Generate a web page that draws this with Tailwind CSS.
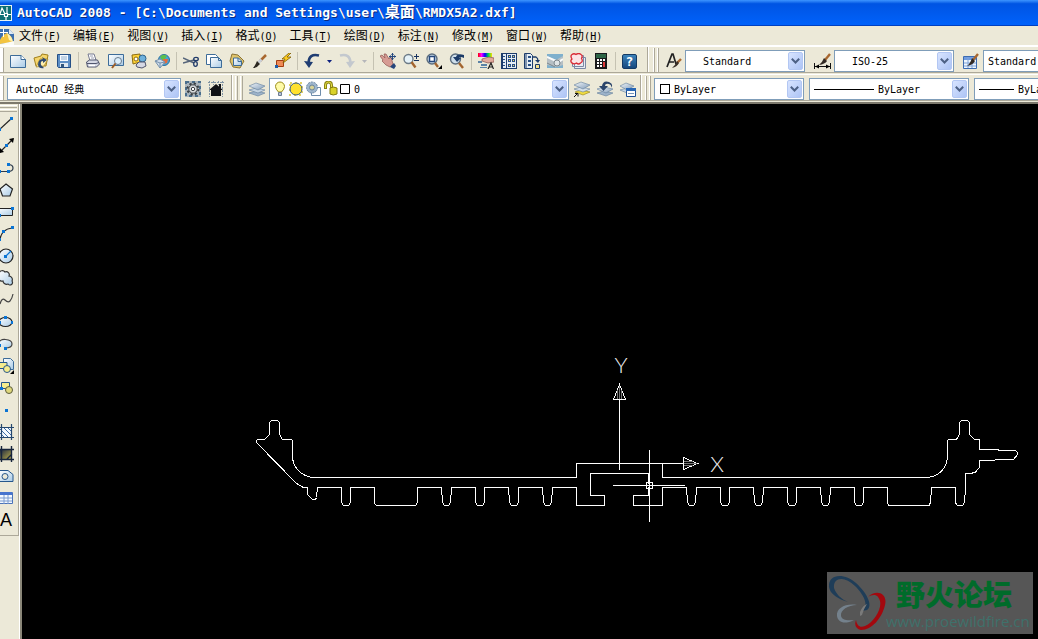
<!DOCTYPE html>
<html lang="zh-CN">
<head>
  <meta charset="UTF-8" />
  <meta name="viewport" content="width=device-width, initial-scale=1.0" />
  <title>AutoCAD 2008</title>
  <script src="https://cdn.jsdelivr.net/npm/@tailwindcss/browser@4"></script>
</head>
<body class="h-screen flex flex-col overflow-hidden bg-[#ece9d8] text-black font-['DejaVu_Sans_Mono','Noto_Sans_CJK_SC',monospace] text-[10px]">

  <!-- gradients shared by the icons -->
  <svg class="absolute w-0 h-0" aria-hidden="true">
    <defs>
      <linearGradient id="sheet" x1="0" y1="0" x2="1" y2="1"><stop offset="0" stop-color="#fff" /><stop offset="1" stop-color="#a9cbe6" /></linearGradient>
      <linearGradient id="steel" x1="0" y1="0" x2="1" y2="1"><stop offset="0" stop-color="#f4f8fb" /><stop offset="1" stop-color="#7f9ab8" /></linearGradient>
      <linearGradient id="rainbow"><stop offset="0" stop-color="#f00" /><stop offset=".25" stop-color="#f0f" /><stop offset=".5" stop-color="#00f" /><stop offset=".75" stop-color="#0d4" /><stop offset="1" stop-color="#fd0" /></linearGradient>
      <linearGradient id="dusk" x1="0" y1="0" x2="1" y2="1"><stop offset="0" stop-color="#16213f" /><stop offset="1" stop-color="#b5a94a" /></linearGradient>
    </defs>
  </svg>

  <header class="h-[26px] shrink-0 flex items-center gap-[5px] bg-linear-to-b from-[#3d95ff] via-[#0054e3] via-15% to-[#0062fb] border-b border-[#0040c0]">
    <svg class="w-3 h-4 shrink-0" viewBox="0 0 12 16"><path d="M0 0h12v16H0z" fill="#e9f3f3" /><path d="M0 1h11v14H0z" fill="#0c6f73" /><path d="M0 9l2-6 3 6M7 2v7M0 9.500h5M7 9.500h4M6 12v3M4.500 8.500h3v3h-3z" fill="none" stroke="#fff" stroke-width="1.200" /></svg>
    <h1 class="text-white font-bold text-[13px] leading-4 whitespace-pre [text-shadow:1px_1px_0_#0a2a80]">AutoCAD 2008 - [C:\Documents and Settings\user\<span class="text-[15px]">桌面</span>\RMDX5A2.dxf]</h1>
  </header>

  <nav class="h-[21px] shrink-0 flex items-center gap-3 pt-[2px] border-b-2 border-white whitespace-nowrap leading-4">
    <svg class="w-[14px] h-4 shrink-0 -mr-[7px]" viewBox="0 0 14 16"><path d="M0 0h9l5 5v11H0z" fill="#3d6fae" /><path d="M9 0v5h5z" fill="#dce8f4" /><path d="M0 11Q2 6 7 4q5 3 6 9l-6 1-7 1z" fill="#f3c440" /><path d="M7 4q5 3 6 9l-4-2z" fill="#fff1b0" /><path d="M3.500 0v8M0 3.500h8" stroke="#fff" /><path d="M0 15q6-1 14-3v4H0z" fill="#fbfbf4" /></svg>
    <button><span class="text-xs">文件</span>(<u>F</u>)</button>
    <button><span class="text-xs">编辑</span>(<u>E</u>)</button>
    <button><span class="text-xs">视图</span>(<u>V</u>)</button>
    <button><span class="text-xs">插入</span>(<u>I</u>)</button>
    <button><span class="text-xs">格式</span>(<u>O</u>)</button>
    <button><span class="text-xs">工具</span>(<u>T</u>)</button>
    <button><span class="text-xs">绘图</span>(<u>D</u>)</button>
    <button><span class="text-xs">标注</span>(<u>N</u>)</button>
    <button><span class="text-xs">修改</span>(<u>M</u>)</button>
    <button><span class="text-xs">窗口</span>(<u>W</u>)</button>
    <button><span class="text-xs">帮助</span>(<u>H</u>)</button>
  </nav>

  <!-- standard + styles toolbars -->
  <div class="h-[26px] shrink-0 flex border-b border-[#aca899]">
    <div class="flex items-end shrink-0 w-[648px] border-r border-[#aca899]">
      <span class="w-1 h-6 mr-[2px] border-r border-[#aca899] bg-white"></span>
      <button aria-label="New" class="w-[23px] h-[22px] grid place-items-center"><svg class="size-4" viewBox="0 0 16 16"><path d="M.5 2.500H11l4.500 4V14.500H.5z" fill="url(#sheet)" stroke="#3d6c99" /><path d="M11 2.500v4h4.500" fill="#fff" stroke="#3d6c99" /></svg></button>
      <button aria-label="Open" class="w-[23px] h-[22px] grid place-items-center"><svg class="size-4" viewBox="0 0 16 16"><path d="M1 5l7-2 1-2 6 1-2 11H3z" fill="#f5d56b" stroke="#a07f1c" /><path d="M3 14L7 6h8l-4 7z" fill="#fff0ae" stroke="#a07f1c" stroke-width=".7" /><path d="M5 12q0-6 5-6l-1-2 5 3-4 3V8q-3 0-2 4l3 3q-5 1-6-3z" fill="#304b70" /></svg></button>
      <button aria-label="Save" class="w-[23px] h-[22px] grid place-items-center"><svg class="size-4" viewBox="0 0 16 16"><path d="M1.500 1.500h13v13H2.500l-1-1z" fill="#5d8fc6" stroke="#244f86" /><path d="M4 2h8v6H4z" fill="#f7fbff" /><path d="M5 4h6M5 6h6" stroke="#8daccc" /><path d="M4 10h8v4H4z" fill="#dde8f2" /><path d="M5 11h3v3H5z" fill="#31577f" /></svg></button>
      <span class="w-px h-[18px] ml-[3px] mr-[2px] mb-[2px] bg-[#c5c2b2]"></span>
      <button aria-label="Plot" class="w-[23px] h-[22px] grid place-items-center"><svg class="size-4" viewBox="0 0 16 16"><path d="M3 1h6l2 6-6 1z" fill="#fff" stroke="#777b91" /><path d="M5 3h3M6 5h3" stroke="#9a9eb1" /><path d="M1.500 9l3-2 8 0 2 4-3 3-9 0z" fill="#d5d8e4" stroke="#51566e" /><path d="M2 10.500h9l3-1" stroke="#51566e" fill="none" /><path d="M4 12.500h6" stroke="#fff" stroke-width="1.500" /></svg></button>
      <button aria-label="Plot preview" class="w-[23px] h-[22px] grid place-items-center"><svg class="size-4" viewBox="0 0 16 16"><path d="M.5 1.500h15v11H.5z" fill="url(#sheet)" stroke="#3d6c99" /><circle cx="10" cy="8" r="3.500" fill="#dceffc" stroke="#697a8c" /><path d="M7.500 10.500L4 15" stroke="#9c5b25" stroke-width="2" /></svg></button>
      <button aria-label="Publish" class="w-[23px] h-[22px] grid place-items-center"><svg class="size-4" viewBox="0 0 16 16"><path d="M1 2l8-1v8l-7 2z" fill="#ffd337" stroke="#8b6b10" /><circle cx="5" cy="6" r="2" fill="#fff" stroke="#8b6b10" /><circle cx="11.500" cy="5.500" r="3.500" fill="#6eb1dc" stroke="#2c618c" /><path d="M5 12l3-3h6l1 4-4 2-5-1z" fill="#d5d8e4" stroke="#51566e" /></svg></button>
      <button aria-label="3DDWF" class="w-[23px] h-[22px] grid place-items-center"><svg class="size-4" viewBox="0 0 16 16"><circle cx="10" cy="7" r="5.500" fill="#4aa3d6" stroke="#2b719f" /><path d="M6 4q3-4 7-1l-2 3-3 1z" fill="#5fbf4c" /><path d="M9 6l5 0-1 4-4 1z" fill="#e56c3c" /><path d="M1 8l5-2 5 3-5 6z" fill="#cfdcea" stroke="#7692ad" /><path d="M1 8l5 2 5-1M6 10v5" fill="none" stroke="#7692ad" /></svg></button>
      <span class="w-px h-[18px] ml-[3px] mr-[2px] mb-[2px] bg-[#c5c2b2]"></span>
      <button aria-label="Cut" class="w-[23px] h-[22px] grid place-items-center"><svg class="size-4" viewBox="0 0 16 16"><path d="M0 5l11 5M0 10l11-3" stroke="#56657a" stroke-width="1.500" /><ellipse cx="13" cy="6" rx="2.300" ry="1.700" fill="none" stroke="#203a69" stroke-width="1.300" /><ellipse cx="12.500" cy="11" rx="1.800" ry="2.300" fill="none" stroke="#203a69" stroke-width="1.300" /></svg></button>
      <button aria-label="Copy" class="w-[23px] h-[22px] grid place-items-center"><svg class="size-4" viewBox="0 0 16 16"><path d="M.5 1.500h9l2 2v8H.5z" fill="#fff" stroke="#3d6c99" /><path d="M4.500 4.500h8l3 3v7h-11z" fill="url(#sheet)" stroke="#3d6c99" /><path d="M12.500 4.500v3h3" fill="none" stroke="#3d6c99" /></svg></button>
      <button aria-label="Paste" class="w-[23px] h-[22px] grid place-items-center"><svg class="size-4" viewBox="0 0 16 16"><path d="M3 1l6 1 6 6-4 7-7-1-3-6z" fill="#dfc36b" stroke="#8b7334" /><path d="M4.500 5h5l3 3v4.500h-8z" fill="url(#sheet)" stroke="#3d6c99" /><path d="M9 5v3.500h3" fill="none" stroke="#3d6c99" /></svg></button>
      <button aria-label="Match properties" class="w-[23px] h-[22px] grid place-items-center"><svg class="size-4" viewBox="0 0 16 16"><path d="M14 2L8 8" stroke="#a8672f" stroke-width="2.500" /><path d="M9.500 6.500l-3 3" stroke="#c9ced6" stroke-width="3" /><path d="M5 8l3 3q-3 4-7 4 2-2 4-7z" fill="#2c2822" /></svg></button>
      <button aria-label="Block editor" class="w-[23px] h-[22px] grid place-items-center"><svg class="size-4" viewBox="0 0 16 16"><path d="M1.500 7.500h7v6h-7z" fill="#ef8b56" stroke="#a33d12" /><path d="M0 12h3v3H0z" fill="#1d5ea8" /><path d="M14 0L7 6h3l-2 4 8-6h-4l4-4z" fill="#ffce1f" stroke="#7c5a00" stroke-width=".8" /></svg></button>
      <span class="w-px h-[18px] ml-[3px] mr-[2px] mb-[2px] bg-[#c5c2b2]"></span>
      <button aria-label="Undo" class="w-[23px] h-[22px] grid place-items-center"><svg class="size-4" viewBox="0 0 16 16"><path d="M15 2.500Q5 0 4.500 10" fill="none" stroke="#1f3d72" stroke-width="2.600" /><path d="M0 8l9 1-4 6z" fill="#1f3d72" /></svg></button>
      <button aria-label="Undo list" class="w-3 h-[22px] grid place-items-center"><svg class="w-[5px] h-[3px]" viewBox="0 0 5 3"><path d="M0 0h5L2.500 3z" fill="#0c2080" /></svg></button>
      <button aria-label="Redo" class="w-[23px] h-[22px] grid place-items-center"><svg class="size-4" viewBox="0 0 16 16"><path d="M1 2.500Q11 0 11.500 10" fill="none" stroke="#c3c8ce" stroke-width="2.600" /><path d="M16 8l-9 1 4 6z" fill="#c3c8ce" /></svg></button>
      <button aria-label="Redo list" class="w-3 h-[22px] grid place-items-center"><svg class="w-[5px] h-[3px]" viewBox="0 0 5 3"><path d="M0 0h5L2.500 3z" fill="#b5b6ba" /></svg></button>
      <span class="w-px h-[18px] ml-[3px] mr-[2px] mb-[2px] bg-[#c5c2b2]"></span>
      <button aria-label="Pan" class="w-[23px] h-[22px] grid place-items-center"><svg class="size-4" viewBox="0 0 16 16"><path d="M0 3l2-1 3 3-1-4h2l3 5 1-2h1L13 11l-3 3-4-2-4-4 1-1z" fill="#d69b93" stroke="#8e544f" stroke-width=".7" /><path d="M10 14l4-4 2 3-2 3z" fill="#26467c" /><path d="M12.500 0v7M9 3.500h7" stroke="#25497f" /><path d="M12.500 0l1.500 2h-3zM12.500 7l1.500-2h-3zM16 3.500L14 2v3zM9 3.500L11 2v3z" fill="#25497f" /></svg></button>
      <button aria-label="Zoom realtime" class="w-[23px] h-[22px] grid place-items-center"><svg class="size-4" viewBox="0 0 16 16"><circle cx="5.500" cy="6" r="4.500" fill="#e5f2f8" stroke="#6c7b87" stroke-width="1.400" /><path d="M8.500 9l4 5.500" stroke="#a3652f" stroke-width="2.400" /><path d="M13.500 1v5M11 3.500h5M11 7.500h5" stroke="#17325e" /></svg></button>
      <button aria-label="Zoom window" class="w-[23px] h-[22px] grid place-items-center"><svg class="size-4" viewBox="0 0 16 16"><circle cx="6" cy="6" r="5" fill="#cfdfeb" stroke="#5c6d7d" stroke-width="1.400" /><path d="M3.500 3.500h5v5h-5z" fill="#fff" stroke="#24477d" stroke-width="1.500" /><path d="M9 10l3 4" stroke="#a3652f" stroke-width="2.400" /><path d="M16 12v4h-4z" /></svg></button>
      <button aria-label="Zoom previous" class="w-[23px] h-[22px] grid place-items-center"><svg class="size-4" viewBox="0 0 16 16"><circle cx="6.500" cy="6" r="5" fill="#cfdfeb" stroke="#5c6d7d" stroke-width="1.400" /><path d="M15 2Q8 0 7 4H4l4 5 4-4h-2q1-2 5 0z" fill="#1c3b68" /><path d="M10 10l4 5" stroke="#a3652f" stroke-width="2.400" /></svg></button>
      <span class="w-px h-[18px] ml-[3px] mr-[2px] mb-[2px] bg-[#c5c2b2]"></span>
      <button aria-label="Properties" class="w-[23px] h-[22px] grid place-items-center"><svg class="size-4" viewBox="0 0 16 16"><path d="M0 0h14v4H0z" fill="url(#rainbow)" /><path d="M4 6l7-2 5 1v4l-6 1-6-2z" fill="#e2aa9d" stroke="#85504a" stroke-width=".7" /><path d="M0 8h4v2H0zM3 11h6v2H3zM2 14h7v1H2z" fill="#5c83a6" /><path d="M10 16l3-6 2.500 6M11 14h4" fill="none" stroke="#222" stroke-width="1.200" /></svg></button>
      <button aria-label="DesignCenter" class="w-[23px] h-[22px] grid place-items-center"><svg class="size-4" viewBox="0 0 16 16"><path d="M0 0h16v16H0z" fill="#1d3c6b" /><path d="M2 1h3v14H2zM6 1h9v14H6z" fill="#e5edf4" /><path d="M7 2h3v3H7zM11 2h3v3h-3zM7 6h3v3H7zM11 6h3v3h-3zM7 11h3v3H7zM11 11h3v3h-3z" fill="#284f84" /><path d="M8 3h1v1H8zM12 3h1v1h-1zM8 7h1v1H8zM12 7h1v1h-1zM8 12h1v1H8zM12 12h1v1h-1z" fill="#f6d15b" /><path d="M2 3.500h2M2 6.500h2M2 9.500h2M2 12.500h2" stroke="#284f84" /></svg></button>
      <button aria-label="Tool palettes" class="w-[23px] h-[22px] grid place-items-center"><svg class="size-4" viewBox="0 0 16 16"><path d="M.5.5h6l2 2v13h-8z" fill="#e5edf4" stroke="#1d3c6b" /><path d="M2 1v14" stroke="#1d3c6b" /><path d="M4 3h3v2H4zM4 7h3v2H4zM4 11h3v2H4z" fill="#284f84" /><path d="M8 4h4q2 1 2 4" fill="none" stroke="#1d3c6b" stroke-width="1.300" /><path d="M11 7h5l-2 3z" fill="#1d3c6b" /><path d="M11.500 11.500h4v4h-4z" fill="#f6e08a" stroke="#1d3c6b" /></svg></button>
      <button aria-label="Sheet set manager" class="w-[23px] h-[22px] grid place-items-center"><svg class="size-4" viewBox="0 0 16 16"><path d="M0 1h16v14H0z" fill="#7fb0cd" /><path d="M0 3l9 4 7-4v9l-6 2L0 12z" fill="#b6bfc4" /><path d="M0 4l9 4M10 10l6-4" fill="none" stroke="#f8fafb" stroke-width="2" /><circle cx="10" cy="10" r="3" fill="#dfe4e6" stroke="#7b868c" /><path d="M0 10l8 4" stroke="#7b868c" /></svg></button>
      <button aria-label="Markup set manager" class="w-[23px] h-[22px] grid place-items-center"><svg class="size-4" viewBox="0 0 16 16"><path d="M4.500 4.500h11v11h-11zM2.500 2.500h11v11h-11z" fill="#e9edf3" stroke="#7a88a3" /><path d="M2 1.500q2-1.500 4 0 3-2 5 0 2 1 .5 4 2 3-1 4.500-2 2-4 0-3 2-5-.5-1.500-2 .5-3.500Q0 3 2 1.500z" fill="#fbe5e5" stroke="#d92b35" stroke-width="1.300" /></svg></button>
      <button aria-label="QuickCalc" class="w-[23px] h-[22px] grid place-items-center"><svg class="size-4" viewBox="0 0 16 16"><path d="M2 0h12v16H2z" fill="#19191b" /><path d="M3 1h10v4H3z" fill="#2e6546" /><path d="M4 6h2v2H4zM7 6h2v2H7zM10 6h2v2h-2zM4 9h2v2H4zM7 9h2v2H7zM4 12h2v2H4zM7 12h2v2H7z" fill="#fff" /><path d="M10 9h2v5h-2z" fill="#e03a3a" /></svg></button>
      <span class="w-px h-[18px] ml-[3px] mr-[2px] mb-[2px] bg-[#c5c2b2]"></span>
      <button aria-label="Help" class="w-[23px] h-[22px] grid place-items-center"><span class="size-[15px] rounded-xs border border-[#143a64] bg-linear-to-b from-[#3c83bb] to-[#17497e] text-white font-bold text-[13px] leading-[13px]">?</span></button>
    </div>

    <div class="flex items-end flex-1 min-w-0 pl-1 gap-[2px] border-l border-white overflow-hidden">
      <span class="w-[3px] h-6 border-x border-l-white border-r-[#aca899]"></span>
      <span class="w-[3px] h-6 border-x border-l-white border-r-[#aca899]"></span>
      <span class="w-[18px] h-[22px] ml-1 grid place-items-center shrink-0"><svg class="size-4" viewBox="0 0 16 16"><path d="M1 14L6 1h1l3 10M3 9h5" fill="none" stroke="#222" stroke-width="1.700" /><path d="M15 6l-4 4" stroke="#a8672f" stroke-width="2.400" /><path d="M11 8l2 2q-2 4-7 5 3-2 5-7z" fill="#3a2f26" /></svg></span>
      <label class="relative w-[120px] h-[22px] shrink-0">
        <select aria-label="Text style" class="block appearance-none w-full h-full bg-white border border-[#7f9db9] pl-[17px] outline-none"><option>Standard</option></select>
        <span class="absolute right-[2px] top-[2px] w-[15px] h-[18px] rounded-xs border border-[#b3c7f3] bg-linear-to-br from-[#d8e4ff] to-[#adc4f5] grid place-items-center pointer-events-none"><svg class="w-[9px] h-[6px]" viewBox="0 0 9 6"><path d="M.8 .8l3.700 3.700L8.200 .8" fill="none" stroke="#4d6185" stroke-width="2" /></svg></span>
      </label>
      <span class="w-px h-[19px] ml-[2px] mr-px mb-[2px] bg-[#c5c2b2]"></span>
      <span class="w-[20px] h-[22px] grid place-items-center shrink-0"><svg class="w-[17px] h-4" viewBox="0 0 17 16"><path d="M16 1l-5 6" stroke="#a8672f" stroke-width="2.400" /><path d="M10 5l3 3q-2 3-8 4 3-2 5-7z" fill="#322a24" /><path d="M.5 10v6M16.500 10v6M1 13.500h15" stroke="#111" /><path d="M1 13.500l4-2v4zM16 13.500l-4-2v4z" /></svg></span>
      <label class="relative w-[120px] h-[22px] shrink-0">
        <select aria-label="Dimension style" class="block appearance-none w-full h-full bg-white border border-[#7f9db9] pl-[17px] outline-none"><option>ISO-25</option></select>
        <span class="absolute right-[2px] top-[2px] w-[15px] h-[18px] rounded-xs border border-[#b3c7f3] bg-linear-to-br from-[#d8e4ff] to-[#adc4f5] grid place-items-center pointer-events-none"><svg class="w-[9px] h-[6px]" viewBox="0 0 9 6"><path d="M.8 .8l3.700 3.700L8.200 .8" fill="none" stroke="#4d6185" stroke-width="2" /></svg></span>
      </label>
      <span class="w-px h-[19px] ml-[2px] mr-px mb-[2px] bg-[#c5c2b2]"></span>
      <span class="w-[20px] h-[22px] grid place-items-center shrink-0"><svg class="size-4" viewBox="0 0 16 16"><path d="M.5 3.500h13v12H.5z" fill="#eef5fd" stroke="#3d6cb0" /><path d="M1 4h12v3H1z" fill="#6f9be0" /><path d="M1 10h12M1 13h12M5 4v11M9 4v11" stroke="#7fa3d8" /><path d="M15 1l-5 6" stroke="#a8672f" stroke-width="2.400" /><path d="M9 5l3 3q-2 4-8 5 3-2 5-8z" fill="#322a24" /></svg></span>
      <label class="w-[120px] h-[22px] shrink-0">
        <select aria-label="Table style" class="block appearance-none w-full h-full bg-white border border-[#7f9db9] pl-1 outline-none"><option>Standard</option></select>
      </label>
    </div>
  </div>

  <!-- workspaces + layers + properties toolbars -->
  <div class="h-[27px] mt-px shrink-0 flex border-t border-t-white border-b border-b-[#aca899]">
    <div class="flex items-end shrink-0 w-[232px] border-r border-[#aca899]">
      <span class="w-1 h-6 mr-[3px] border-r border-[#aca899] bg-white"></span>
      <label class="relative w-[174px] h-[22px]">
        <select aria-label="Workspace" class="block appearance-none w-full h-full bg-white border border-[#7f9db9] pl-2 outline-none"><option>AutoCAD 经典</option></select>
        <span class="absolute right-[2px] top-[2px] w-[15px] h-[18px] rounded-xs border border-[#b3c7f3] bg-linear-to-br from-[#d8e4ff] to-[#adc4f5] grid place-items-center pointer-events-none"><svg class="w-[9px] h-[6px]" viewBox="0 0 9 6"><path d="M.8 .8l3.700 3.700L8.200 .8" fill="none" stroke="#4d6185" stroke-width="2" /></svg></span>
      </label>
      <button aria-label="Workspace settings" class="w-[23px] h-[22px] grid place-items-center"><svg class="size-4" viewBox="0 0 16 16"><path d="M0 0h16v16H0z" fill="#a9b4bc" /><path d="M1 1h14v14H1z" fill="none" stroke="#4a6e8c" stroke-width="2" stroke-dasharray="3 3" /><circle cx="8" cy="8" r="5.500" fill="none" stroke="#3a3f43" stroke-width="2" stroke-dasharray="2.200 2.120" /><circle cx="8" cy="8" r="4.200" fill="#d9dcde" stroke="#3a3f43" /><circle cx="8" cy="8" r="1.700" fill="#fff" stroke="#3a3f43" /></svg></button>
      <button aria-label="My workspace" class="w-[23px] h-[22px] grid place-items-center"><svg class="size-4" viewBox="0 0 16 16"><path d="M0 1.500h16M1.500 0v16M5.500 0v4M10.500 0v4M14.500 0v16" stroke="#8194a4" stroke-dasharray="2 1" /><path d="M1 9l7-6 7 6h-2v6H3V9z" fill="#101216" /><path d="M11 3h2v4h-2z" fill="#101216" /></svg></button>
    </div>

    <div class="flex items-end shrink-0 w-[409px] border-l border-white border-r border-r-[#aca899] pl-[2px] gap-[2px]">
      <span class="w-[3px] h-6 border-x border-l-white border-r-[#aca899]"></span>
      <span class="w-[3px] h-6 border-x border-l-white border-r-[#aca899]"></span>
      <button aria-label="Layer properties manager" class="w-[23px] h-[22px] grid place-items-center"><svg class="size-4" viewBox="0 0 16 16"><path d="M0 12l7-2 9 2-7 3z" fill="#9db3ca" stroke="#637f9c" stroke-width=".6" /><path d="M0 9l7-2 9 2-7 3z" fill="#c6d5e3" stroke="#637f9c" stroke-width=".6" /><path d="M0 5l7-3 9 3-7 4z" fill="url(#steel)" stroke="#637f9c" stroke-width=".6" /></svg></button>
      <label class="relative w-[300px] h-[22px] shrink-0 -ml-px">
        <select aria-label="Layer" class="block appearance-none w-full h-full bg-white border border-[#7f9db9] pl-[84px] outline-none"><option>0</option></select>
        <svg class="absolute left-1 top-[3px] w-[78px] h-4 pointer-events-none" viewBox="0 0 78 16">
          <path d="M5.500 11Q2.500 8 2.500 5.500a4.500 4.500 0 0 1 9 0Q11.500 8 8.500 11z" fill="#fffba8" stroke="#9b8c18" />
          <path d="M5.500 11.500h3v3h-3z" fill="#b9c5d6" stroke="#6c7c92" />
          <path d="M17 2h12v12H17z" fill="none" stroke="#e3d267" stroke-width="2" stroke-dasharray="2 3" />
          <circle cx="23" cy="8" r="6" fill="#ffe12d" stroke="#34597c" />
          <path d="M38.500 6.500h9v8h-9z" fill="#fff" stroke="#6f8dab" />
          <circle cx="39" cy="6.500" r="5.500" fill="#9fb6cc" stroke="#6985a1" stroke-dasharray="2 1" />
          <circle cx="39" cy="6.500" r="2.500" fill="#d9d396" stroke="#6985a1" />
          <path d="M52.500 8V4q0-3 3-3t3 3v3" fill="none" stroke="#8b8415" stroke-width="3" />
          <path d="M52.500 7V4q0-3 3-3t3 3v3" fill="none" stroke="#e4dd47" />
          <path d="M57 7q3-2 7 0v6q-4 2-7 0z" fill="#d9d229" stroke="#827b12" />
          <path d="M67.500 3.500h9v9h-9z" fill="#fff" stroke="#000" />
        </svg>
        <span class="absolute right-[2px] top-[2px] w-[15px] h-[18px] rounded-xs border border-[#b3c7f3] bg-linear-to-br from-[#d8e4ff] to-[#adc4f5] grid place-items-center pointer-events-none"><svg class="w-[9px] h-[6px]" viewBox="0 0 9 6"><path d="M.8 .8l3.700 3.700L8.200 .8" fill="none" stroke="#4d6185" stroke-width="2" /></svg></span>
      </label>
      <button aria-label="Make object's layer current" class="w-[21px] h-[22px] grid place-items-center"><svg class="size-4" viewBox="0 0 16 16"><path d="M1 11l6-2 9 2-7 3z" fill="#f1dc42" stroke="#8d7f19" stroke-width=".6" /><path d="M0 8l7-2 9 2-7 3z" fill="#d4dfe9" stroke="#637f9c" stroke-width=".6" /><path d="M0 4l7-3 9 3-7 4z" fill="url(#steel)" stroke="#637f9c" stroke-width=".6" /><path d="M0 16l3-3M1 12.500h3v3" fill="none" stroke="#111" /></svg></button>
      <button aria-label="Layer previous" class="w-[21px] h-[22px] grid place-items-center"><svg class="size-4" viewBox="0 0 16 16"><path d="M0 12l7-2 9 2-7 3z" fill="#9db3ca" stroke="#637f9c" stroke-width=".6" /><path d="M0 8l7-2 9 2-7 4z" fill="url(#steel)" stroke="#637f9c" stroke-width=".6" /><path d="M12 1Q6-1 5 5H2l4.500 5L11 5H8q0-3 4-2 3 1 2 4 3-4-2-6z" fill="#2b456b" /></svg></button>
      <button aria-label="Layer states manager" class="w-[21px] h-[22px] grid place-items-center"><svg class="size-4" viewBox="0 0 16 16"><path d="M0 9l7-2 7 2-7 3z" fill="#c6d5e3" stroke="#637f9c" stroke-width=".6" /><path d="M0 5l6-3 8 3-7 4z" fill="url(#steel)" stroke="#637f9c" stroke-width=".6" /><path d="M6.500 7.500h9v8h-9z" fill="#fff" stroke="#1e4f94" /><path d="M6 7h10v3H6z" fill="#2866b4" /><path d="M8 12.500h6" stroke="#7795bb" /></svg></button>
    </div>

    <div class="flex items-end flex-1 min-w-0 pl-[3px] gap-[2px] border-l border-white overflow-hidden">
      <span class="w-[3px] h-6 border-x border-l-white border-r-[#aca899]"></span>
      <span class="w-[3px] h-6 border-x border-l-white border-r-[#aca899]"></span>
      <label class="relative w-[150px] h-[22px] ml-px shrink-0">
        <select aria-label="Color" class="block appearance-none w-full h-full bg-white border border-[#7f9db9] pl-[19px] outline-none"><option>ByLayer</option></select>
        <span class="absolute left-[6px] top-[6px] size-[10px] border border-black pointer-events-none"></span>
        <span class="absolute right-[2px] top-[2px] w-[15px] h-[18px] rounded-xs border border-[#b3c7f3] bg-linear-to-br from-[#d8e4ff] to-[#adc4f5] grid place-items-center pointer-events-none"><svg class="w-[9px] h-[6px]" viewBox="0 0 9 6"><path d="M.8 .8l3.700 3.700L8.200 .8" fill="none" stroke="#4d6185" stroke-width="2" /></svg></span>
      </label>
      <span class="w-px h-[19px] mr-px mb-[2px] bg-[#c5c2b2]"></span>
      <label class="relative w-[160px] h-[22px] shrink-0">
        <select aria-label="Linetype" class="block appearance-none w-full h-full bg-white border border-[#7f9db9] pl-[68px] outline-none"><option>ByLayer</option></select>
        <span class="absolute left-[5px] top-[11px] w-[60px] h-px bg-black pointer-events-none"></span>
        <span class="absolute right-[2px] top-[2px] w-[15px] h-[18px] rounded-xs border border-[#b3c7f3] bg-linear-to-br from-[#d8e4ff] to-[#adc4f5] grid place-items-center pointer-events-none"><svg class="w-[9px] h-[6px]" viewBox="0 0 9 6"><path d="M.8 .8l3.700 3.700L8.200 .8" fill="none" stroke="#4d6185" stroke-width="2" /></svg></span>
      </label>
      <span class="w-px h-[19px] mr-px mb-[2px] bg-[#c5c2b2]"></span>
      <label class="relative w-[160px] h-[22px] shrink-0">
        <select aria-label="Lineweight" class="block appearance-none w-full h-full bg-white border border-[#7f9db9] pl-[43px] outline-none"><option>ByLayer</option></select>
        <span class="absolute left-[5px] top-[11px] w-[35px] h-px bg-black pointer-events-none"></span>
      </label>
    </div>
  </div>

  <main class="flex-1 min-h-0 flex mt-px border-t-2 border-[#7d796d]">
    <!-- draw toolbar, its left edge runs off the window -->
    <aside class="w-5 shrink-0 border-r border-white">
      <div class="w-[19px] border-r border-b border-[#aca899] pb-1 overflow-hidden">
        <div class="h-[9px] pt-px flex flex-col gap-px">
          <span class="w-[17px] h-[3px] border-y border-t-white border-b-[#aca899]"></span>
          <span class="w-[17px] h-[3px] border-y border-t-white border-b-[#aca899]"></span>
        </div>
        <button aria-label="Line" class="flex items-center h-[22px]"><svg class="w-[14px] h-4" viewBox="0 0 14 16"><path d="M0 13L12 2" stroke="#222" stroke-width="1.200" /><path d="M10 1h3v3h-3zM-1 12h2v3h-2z" fill="#0a74d4" /></svg></button>
        <button aria-label="Construction line" class="flex items-center h-[22px]"><svg class="w-[14px] h-4" viewBox="0 0 14 16"><path d="M0 14L13 1" stroke="#222" stroke-width="1.200" /><path d="M14 0l-1 5-4-4zM0 15v-5l4 4z" /><path d="M5 6h3v3H5z" fill="#0a74d4" /></svg></button>
        <button aria-label="Polyline" class="flex items-center h-[22px]"><svg class="w-[14px] h-4" viewBox="0 0 14 16"><path d="M0 11.500h8q5 0 5-3.500t-5-3.500" fill="none" stroke="#2b3a4c" stroke-width="1.200" /><path d="M7 3h3v3H7zM7 10h3v3H7zM0 10h1v3H0z" fill="#0a74d4" /></svg></button>
        <button aria-label="Polygon" class="flex items-center h-[22px]"><svg class="w-[14px] h-4" viewBox="0 0 14 16"><path d="M6 2l6.500 5-2.500 7H2.500L0 7z" fill="url(#sheet)" stroke="#222" stroke-width="1.200" /></svg></button>
        <button aria-label="Rectangle" class="flex items-center h-[22px]"><svg class="w-[14px] h-4" viewBox="0 0 14 16"><path d="M-2 4.500h14.500v7H-2z" fill="url(#sheet)" stroke="#222" /><path d="M11 3h3v3h-3zM0 10h1v3H0z" fill="#0a74d4" /></svg></button>
        <button aria-label="Arc" class="flex items-center h-[22px]"><svg class="w-[14px] h-4" viewBox="0 0 14 16"><path d="M0 13Q2 3 12 2" fill="none" stroke="#222" stroke-width="1.200" /><path d="M11 0h3v3h-3zM2 4h3v3H2zM0 12h1v3H0z" fill="#0a74d4" /></svg></button>
        <button aria-label="Circle" class="flex items-center h-[22px]"><svg class="w-[14px] h-4" viewBox="0 0 14 16"><circle cx="6" cy="8" r="7" fill="url(#sheet)" stroke="#222" stroke-width="1.200" /><path d="M6 8l5-5" stroke="#0a74d4" stroke-width="1.200" /><path d="M4 7h3v3H4z" fill="#0a74d4" /></svg></button>
        <button aria-label="Revision cloud" class="flex items-center h-[22px]"><svg class="w-[14px] h-4" viewBox="0 0 14 16"><path d="M-1 3a3.500 3.500 0 0 1 6-1 3 3 0 0 1 4 4 3.500 3.500 0 0 1 3 5 2.500 2.500 0 0 1-4 3 3.500 3.500 0 0 1-5-3 3 3 0 0 1-4-2z" fill="url(#sheet)" stroke="#333" stroke-width="1.200" /></svg></button>
        <button aria-label="Spline" class="flex items-center h-[22px]"><svg class="w-[14px] h-4" viewBox="0 0 14 16"><path d="M0 12Q2 5 5 8t5 1q2-2 3-7" fill="none" stroke="#444" stroke-width="1.200" /></svg></button>
        <button aria-label="Ellipse" class="flex items-center h-[22px]"><svg class="w-[14px] h-4" viewBox="0 0 14 16"><ellipse cx="5.500" cy="8" rx="6.500" ry="4.500" fill="url(#sheet)" stroke="#222" stroke-width="1.200" /><path d="M4 2h3v3H4zM11 7h2v3h-2zM0 7h1v3H0z" fill="#0a74d4" /></svg></button>
        <button aria-label="Ellipse arc" class="flex items-center h-[22px]"><svg class="w-[14px] h-4" viewBox="0 0 14 16"><path d="M5 12q7 0 7-4T5.500 3.500-1 8" fill="url(#sheet)" stroke="#444" stroke-width="1.200" /><path d="M4 11h3v3H4zM0 8h1v3H0z" fill="#0a74d4" /></svg></button>
        <button aria-label="Insert block" class="flex items-center h-[22px]"><svg class="w-[14px] h-4" viewBox="0 0 14 16"><path d="M3.500.5h7l3 3v8h-10z" fill="url(#sheet)" stroke="#3d6c99" /><path d="M-1 4.500h8v6h-8z" fill="#f5ec8d" stroke="#26578c" /><circle cx="7" cy="11" r="3.500" fill="#f5ec8d" stroke="#26578c" /><path d="M14 12v4h-4z" /></svg></button>
        <button aria-label="Make block" class="flex items-center h-[22px]"><svg class="w-[14px] h-4" viewBox="0 0 14 16"><path d="M1.500 2.500h8v6h-8z" fill="#f5ec8d" stroke="#26578c" /><circle cx="9" cy="10" r="3.500" fill="#ded77c" stroke="#5b5c3b" /><path d="M0 7h3v3H0z" fill="#0a74d4" /></svg></button>
        <button aria-label="Point" class="flex items-center h-[22px]"><svg class="w-[14px] h-4" viewBox="0 0 14 16"><path d="M5 7h3v3H5z" fill="#0a74d4" /></svg></button>
        <button aria-label="Hatch" class="flex items-center h-[22px]"><svg class="w-[14px] h-4" viewBox="0 0 14 16"><path d="M0 3h11v10H0z" fill="#f5faff" /><path d="M0 5l8 8M0 9l4 4M3 3l8 8M7 3l4 4" stroke="#3b6da5" /><path d="M0 3.500h14M0 13.500h14M1.500 0v16M11.500 0v16" stroke="#25476e" stroke-width="1.200" /></svg></button>
        <button aria-label="Gradient" class="flex items-center h-[22px]"><svg class="w-[14px] h-4" viewBox="0 0 14 16"><path d="M0 3h11v10H0z" fill="url(#dusk)" /><path d="M0 3.500h14M0 13.500h14M1.500 0v16M11.500 0v16M7 13l5-5" stroke="#17253c" stroke-width="1.400" /></svg></button>
        <button aria-label="Region" class="flex items-center h-[22px]"><svg class="w-[14px] h-4" viewBox="0 0 14 16"><path d="M-1 2.500h9l5 4v7H-1z" fill="url(#sheet)" stroke="#26578c" /><circle cx="5" cy="8.500" r="3" fill="#ece9d8" stroke="#26578c" /></svg></button>
        <button aria-label="Table" class="flex items-center h-[22px]"><svg class="w-[14px] h-4" viewBox="0 0 14 16"><path d="M-1 2.500h13.500v11H-1z" fill="#f4f9ff" stroke="#4a72b8" /><path d="M0 2h12v3H0z" fill="#4674ce" /><path d="M0 8h12M0 11h12M4 5v9M8 5v9" stroke="#7a9cd0" /></svg></button>
        <button aria-label="Multiline text" class="flex items-center h-[22px] font-['Liberation_Sans',sans-serif] text-[18px] leading-5">A</button>
      </div>
    </aside>

    <div class="relative flex-1 min-w-0 overflow-hidden bg-black border-l-2 border-[#8a8678]">
      <!-- viewBox starts at the canvas corner so the model keeps window coordinates -->
      <svg class="absolute left-0 top-0 w-[1016px] h-[535px]" viewBox="22 104 1016 535" fill="none" stroke="#fff" shape-rendering="crispEdges">
        <path d="M256.500 442.500V440.500L258 439.500H264.500L269.500 434.500V422.500L271.500 420.500H277.500L279.500 422.500V434.500L282.500 439.500H291.500L292.500 441V458.500Q295.500 474.500 312.500 477.500H576.500V463.500H662.500V477.500H928.500Q944.500 474.500 947.500 458.500V441L948.500 439.500H956.500L959.500 434.500V422.500L961.500 420.500H967.500L969.500 422.500V434.500L974.500 439.500H979.500V449.500H998L999 450.500H1015.500L1017.500 452.500V454.500L1013.500 459.500H995.500L994 460.500H979.500V467.500L975 472.500L970 473.500H965.500V487.500L964.500 502.500L962.500 505.500H957.500L955.500 503V487.500H931.500L930.500 502.500L929 505.500H889L887.500 503.500V487.500H863.500V502.500L861.500 505.500H856.500L854.500 502.500V487.500H830.500L829.500 502.500L827.500 505.500H823.500L821.500 502.500L820.500 487.500H796.500V502.500L794.500 505.500H789.500L787.500 502.500V487.500H763.500L762.500 502.500L760.500 505.500H756.500L754.500 502.500L753.500 487.500H729.500V502.500L727.500 505.500H722.500L720.500 502.500V487.500H696.500L695.500 502.500L693.500 505.500H689.500L687.500 502.500L686.500 487.500H662.500V505.500H633.500V495.500H648.500V473.500H590.500V495.500H604.500V505.500H576.500V487.500H552.500L551.500 502.500L549.500 505.500H545.500L543.500 502.500L542.500 487.500H518.500V502.500L516.500 505.500H511.500L509.500 502.500L508.500 487.500H484.500V502.500L482.500 505.500H477.500L475.500 502.500V487.500H451.500L450.500 502.500L448.500 505.500H444.500L442.500 502.500L441.500 487.500H417.500V502.500L415.500 505.500H376.500L374.500 503.500V487.500H350.500V502.500L348.500 505.500H343.500L341.500 502.500V487.500H317.500L316.500 497.500L315.500 499.500H312.500L307.500 494.500V487.500H303.500L296.500 483.500Z" />
        <!-- UCS icon -->
        <path d="M619.500 470V399.500M613.500 399.500H625.500L619.500 384.500ZM577 463.500H683.500M683.500 457.500V469.500L697.500 463.500Z" />
        <path d="M617.500 390V399M619.500 386V399M621.500 390V399M684 461.500H693M684 463.500H697M684 465.500H693" stroke="#777" />
        <g class="font-['Lato',sans-serif] font-light text-[22px] antialiased" fill="#eee" stroke="none" text-anchor="middle">
          <text x="621" y="373">Y</text>
          <text x="717" y="472">X</text>
        </g>
        <!-- crosshair -->
        <path d="M649.500 450V522M613 485.500H685M646.500 482.500H652.500V488.500H646.500Z" />
        <path d="M648 484h1v1h-1zM650 484h1v1h-1zM648 486h1v1h-1zM650 486h1v1h-1z" fill="#000" stroke="none" />
      </svg>

      <div class="absolute right-[5px] bottom-[5px] w-[206px] h-[62px] bg-[#565656] flex">
        <svg class="w-[60px] h-[62px] shrink-0" viewBox="0 0 60 62">
          <path fill-rule="evenodd" d="M2 15C1 1 18 1 29 11C41 22 46 34 40 38L35 39C42 34 38 24 28 14C18 4 6 5 7 16C9 22 14 27 21 30C11 27 3 22 2 15Z" fill="#1f3d58" />
          <path d="M41 25C49 17 61 21 58 33C55 46 45 58 34 58C29 57 27 53 29 48C30 54 33 56 38 54C47 50 55 37 53 29C51 22 46 22 41 25Z" fill="#a3080e" />
          <path d="M10 44C9 36 19 31 30 33C21 33 13 38 14 44C15 48 20 49 27 48C17 53 11 50 10 44Z" fill="#74818c" />
          <path d="M33 40q3-7 7-8-3 4-5 11l-2 1z" fill="#7a7a7a" />
        </svg>
        <div class="flex-1 min-w-0 pt-1 -ml-px whitespace-nowrap">
          <p class="pl-[10px] font-['Noto_Sans_CJK_SC',sans-serif] font-black text-[29px] leading-[34px] text-[#006b2a]">野火论坛</p>
          <p class="font-['Open_Sans',sans-serif] text-[15px] leading-[22px] text-[#3f716b]">www.proewildfire.cn</p>
        </div>
      </div>
    </div>
  </main>
</body>
</html>
